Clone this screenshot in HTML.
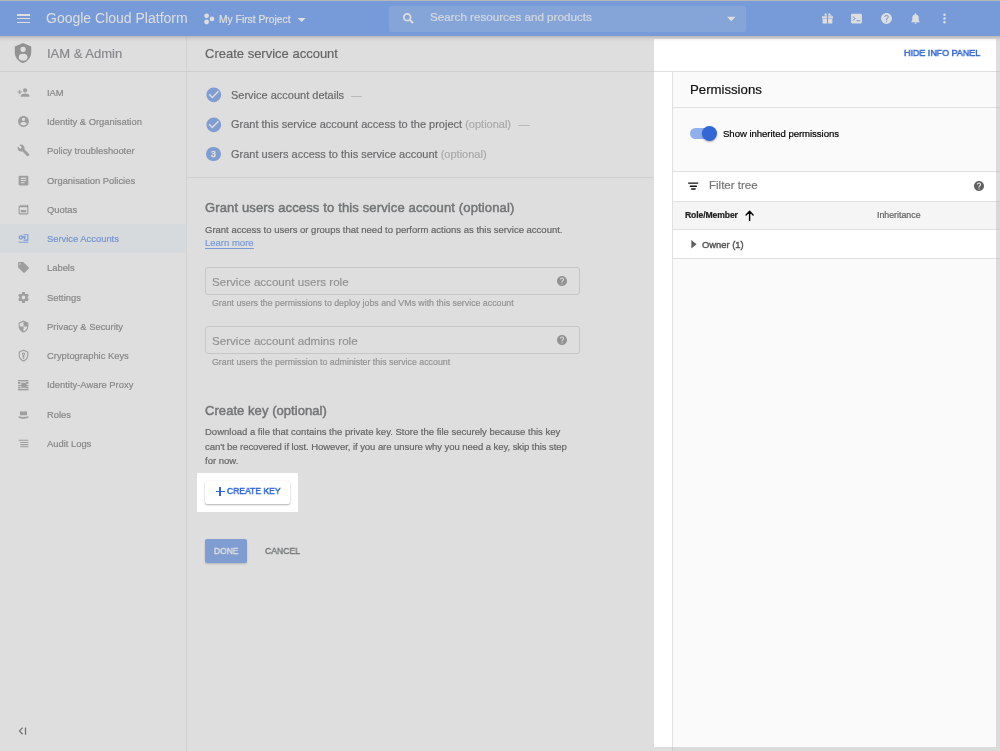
<!DOCTYPE html>
<html><head><meta charset="utf-8"><style>
html,body{margin:0;padding:0;width:1000px;height:751px;overflow:hidden;background:#fff;font-family:"Liberation Sans", sans-serif;}
.t{will-change:transform;-webkit-text-stroke:0.2px currentColor;}
.r{position:absolute;}
.t{position:absolute;white-space:nowrap;}
</style></head><body>
<div class="r" style="left:0px;top:0px;width:1000px;height:1px;background:#b9b9b9;"></div>
<div class="r" style="left:0px;top:1px;width:1000px;height:35px;background:#4285f4;"></div>
<div class="r" style="left:17px;top:14.2px;width:13.2px;height:1.6px;background:#fff;"></div>
<div class="r" style="left:17px;top:17.9px;width:13.2px;height:1.6px;background:#fff;"></div>
<div class="r" style="left:17px;top:21.6px;width:13.2px;height:1.6px;background:#fff;"></div>
<div class="t" style="left:46.4px;top:10.05px;font-size:14px;line-height:16.80px;color:#fff;font-weight:400;-webkit-text-stroke:0">Google Cloud Platform</div>
<svg class="r" style="left:200px;top:10px" width="20" height="18"><circle cx="6.6" cy="5.8" r="2.4" fill="#fff"/><circle cx="6.6" cy="12" r="2.4" fill="#fff"/><circle cx="12" cy="8.9" r="2.3" fill="#fff"/></svg>
<div class="t" style="left:219px;top:14.45px;font-size:10.3px;line-height:12.36px;color:#fff;font-weight:400;">My First Project</div>
<svg class="r" style="left:296px;top:17px" width="12" height="7"><path d="M1.6 1H9.7L5.65 5z" fill="#fff"/></svg>
<div class="r" style="left:389px;top:5.5px;width:357px;height:26px;background:rgba(255,255,255,0.15);border-radius:2px"></div>
<svg class="r" style="left:400px;top:10px" width="16" height="16"><circle cx="7.2" cy="7.2" r="3.4" stroke="#fff" stroke-width="1.7" fill="none"/><path d="M9.6 9.6L13 13" stroke="#fff" stroke-width="2"/></svg>
<div class="t" style="left:430px;top:10.47px;font-size:11.65px;line-height:13.98px;color:rgba(255,255,255,0.85);font-weight:400;">Search resources and products</div>
<svg class="r" style="left:725px;top:15px" width="12" height="8"><path d="M2 1.8H10.5L6.25 6.3z" fill="#fff"/></svg>
<svg class="r" style="left:820.5px;top:11.7px;" width="13" height="13" viewBox="0 0 24 24"><path fill="#fff" fill-rule="evenodd" d="M3 7h7.5V4.5C10.5 3 9 2 7.8 2.6 6.9 3 6.3 4 6.6 5L7 7zm10.5 0H21L17.4 5c.3-1-.3-2-1.2-2.4C15 2 13.5 3 13.5 4.5zM2 8h9v4H2zM13 8h9v4h-9zM3 13h8v8H3zM13 13h8v8h-8z"/></svg>
<svg class="r" style="left:850.0px;top:11.7px;" width="13" height="13" viewBox="0 0 24 24"><path fill="#fff" fill-rule="evenodd" d="M20 3H4c-1.1 0-2 .9-2 2v14c0 1.1.9 2 2 2h16c1.1 0 2-.9 2-2V5c0-1.1-.9-2-2-2zM5.5 16.2l-1-1.1L8.3 12 4.5 8.9l1-1.1L10.7 12zM12 17v-2h7v2z"/></svg>
<svg class="r" style="left:879.5px;top:11.7px;" width="13" height="13" viewBox="0 0 24 24"><path fill="#fff" fill-rule="evenodd" d="M12 2C6.48 2 2 6.48 2 12s4.48 10 10 10 10-4.48 10-10S17.52 2 12 2zm1 17h-2v-2h2v2zm2.07-7.75l-.9.92C13.45 12.9 13 13.5 13 15h-2v-.5c0-1.1.45-2.1 1.17-2.83l1.24-1.26c.37-.36.59-.86.59-1.41 0-1.1-.9-2-2-2s-2 .9-2 2H8c0-2.21 1.79-4 4-4s4 1.79 4 4c0 .88-.36 1.68-.93 2.25z"/></svg>
<svg class="r" style="left:908.5px;top:11.7px;" width="13" height="13" viewBox="0 0 24 24"><path fill="#fff" fill-rule="evenodd" d="M12 22c1.1 0 2-.9 2-2h-4c0 1.1.89 2 2 2zm6-6v-5c0-3.07-1.64-5.64-4.5-6.32V4c0-.83-.67-1.5-1.5-1.5s-1.5.67-1.5 1.5v.68C7.63 5.36 6 7.92 6 11v5l-2 2v1h16v-1l-2-2z"/></svg>
<svg class="r" style="left:936.5px;top:10.7px;" width="15" height="15" viewBox="0 0 24 24"><path fill="#fff" fill-rule="evenodd" d="M12 8c1.1 0 2-.9 2-2s-.9-2-2-2-2 .9-2 2 .9 2 2 2zm0 2c-1.1 0-2 .9-2 2s.9 2 2 2 2-.9 2-2-.9-2-2-2zm0 6c-1.1 0-2 .9-2 2s.9 2 2 2 2-.9 2-2-.9-2-2-2z"/></svg>
<div class="r" style="left:186px;top:36px;width:1px;height:715px;background:#ececec;"></div>
<div class="r" style="left:0px;top:71px;width:187px;height:1px;background:#e6e6e6;"></div>
<svg class="r" style="left:12px;top:42px;" width="22" height="22" viewBox="0 0 24 24"><path fill="#757575" fill-rule="evenodd" d="M12 1L3 5v6c0 5.55 3.84 10.74 9 12 5.16-1.26 9-6.45 9-12V5l-9-4zM9.2 8a2.9 2.9 0 1 0 5.8 0a2.9 2.9 0 1 0 -5.8 0zM7.3 16.6a4.8 3.8 0 1 0 9.6 0a4.8 3.8 0 1 0 -9.6 0z"/></svg>
<div class="t" style="left:46.9px;top:45.50px;font-size:13px;line-height:15.60px;color:#5f6368;font-weight:400;">IAM &amp; Admin</div>
<svg class="r" style="left:17px;top:85.7px;" width="13" height="13" viewBox="0 0 24 24"><path fill="#8a8a8a" fill-rule="evenodd" d="M15 12c2.21 0 4-1.79 4-4s-1.79-4-4-4-4 1.79-4 4 1.79 4 4 4zm-9-2V7H4v3H1v2h3v3h2v-3h3v-2H6zm9 4c-2.67 0-8 1.34-8 4v2h16v-2c0-2.66-5.33-4-8-4z"/></svg>
<div class="t" style="left:47px;top:86.70px;font-size:9.4px;line-height:11.28px;color:#616161;font-weight:400;">IAM</div>
<svg class="r" style="left:17px;top:115.0px;" width="13" height="13" viewBox="0 0 24 24"><path fill="#8a8a8a" fill-rule="evenodd" d="M12 2C6.48 2 2 6.48 2 12s4.48 10 10 10 10-4.48 10-10S17.52 2 12 2zm0 3c1.66 0 3 1.34 3 3s-1.34 3-3 3-3-1.34-3-3 1.34-3 3-3zm0 14.2c-2.5 0-4.71-1.28-6-3.22.03-1.99 4-3.08 6-3.08 1.99 0 5.97 1.09 6 3.08-1.29 1.94-3.5 3.22-6 3.22z"/></svg>
<div class="t" style="left:47px;top:116.00px;font-size:9.4px;line-height:11.28px;color:#616161;font-weight:400;">Identity &amp; Organisation</div>
<svg class="r" style="left:17px;top:144.2px;" width="13" height="13" viewBox="0 0 24 24"><path fill="#8a8a8a" fill-rule="evenodd" d="M22.7 19l-9.1-9.1c.9-2.3.4-5-1.5-6.9-2-2-5-2.4-7.4-1.3L9 6 6 9 1.6 4.7C.4 7.1.9 10.1 2.9 12.1c1.9 1.9 4.6 2.4 6.9 1.5l9.1 9.1c.4.4 1 .4 1.4 0l2.3-2.3c.5-.4.5-1.1.1-1.4z"/></svg>
<div class="t" style="left:47px;top:145.20px;font-size:9.4px;line-height:11.28px;color:#616161;font-weight:400;">Policy troubleshooter</div>
<svg class="r" style="left:17px;top:173.5px;" width="13" height="13" viewBox="0 0 24 24"><path fill="#8a8a8a" fill-rule="evenodd" d="M19 3H5c-1.1 0-2 .9-2 2v14c0 1.1.9 2 2 2h14c1.1 0 2-.9 2-2V5c0-1.1-.9-2-2-2zm-5 14H7v-2h7v2zm3-4H7v-2h10v2zm0-4H7V7h10v2z"/></svg>
<div class="t" style="left:47px;top:174.50px;font-size:9.4px;line-height:11.28px;color:#616161;font-weight:400;">Organisation Policies</div>
<svg class="r" style="left:17px;top:202.8px;" width="13" height="13" viewBox="0 0 24 24"><path fill="#8a8a8a" fill-rule="evenodd" d="M18 3v2h-2V3h-2v2h-2V3h-2v2H8V3H6v2H5c-1.1 0-2 .9-2 2v12c0 1.1.9 2 2 2h14c1.1 0 2-.9 2-2V5c0-1.1-.9-2-2-2zM19 19H5V8h14zM7 13h10v4H7z"/></svg>
<div class="t" style="left:47px;top:203.80px;font-size:9.4px;line-height:11.28px;color:#616161;font-weight:400;">Quotas</div>
<div class="r" style="left:0px;top:223.9px;width:186px;height:29.3px;background:#f3f7fe;"></div>
<svg class="r" style="left:17px;top:232.0px;" width="13" height="13" viewBox="0 0 24 24"><path fill="#4285f4" fill-rule="evenodd" d="M7 6c-2.2 0-4 1.8-4 4s1.8 4 4 4c1.9 0 3.4-1.3 3.9-3h2.1v2h2v-2h1V8h-5.1C10.4 6.8 8.9 6 7 6zm0 2.3c.9 0 1.7.8 1.7 1.7S7.9 11.7 7 11.7 5.3 10.9 5.3 10 6.1 8.3 7 8.3zM12 4v2h7v8h-7v2h9V4zM3 18v2h18v-2z"/></svg>
<div class="t" style="left:47px;top:233.00px;font-size:9.4px;line-height:11.28px;color:#3b78e7;font-weight:400;">Service Accounts</div>
<svg class="r" style="left:17px;top:261.3px;" width="13" height="13" viewBox="0 0 24 24"><path fill="#8a8a8a" fill-rule="evenodd" d="M21.41 11.58l-9-9C12.05 2.22 11.55 2 11 2H4c-1.1 0-2 .9-2 2v7c0 .55.22 1.05.59 1.42l9 9c.36.36.86.58 1.41.58.55 0 1.05-.22 1.41-.59l7-7c.37-.36.59-.86.59-1.41 0-.55-.23-1.06-.59-1.42zM5.5 7C4.67 7 4 6.33 4 5.5S4.67 4 5.5 4 7 4.67 7 5.5 6.33 7 5.5 7z"/></svg>
<div class="t" style="left:47px;top:262.30px;font-size:9.4px;line-height:11.28px;color:#616161;font-weight:400;">Labels</div>
<svg class="r" style="left:17px;top:290.6px;" width="13" height="13" viewBox="0 0 24 24"><path fill="#8a8a8a" fill-rule="evenodd" d="M19.43 12.98c.04-.32.07-.64.07-.98s-.03-.66-.07-.98l2.11-1.65c.19-.15.24-.42.12-.64l-2-3.46c-.12-.22-.39-.3-.61-.22l-2.49 1c-.52-.4-1.08-.73-1.69-.98l-.38-2.65C14.46 2.18 14.25 2 14 2h-4c-.25 0-.46.18-.49.42l-.38 2.65c-.61.25-1.17.59-1.69.98l-2.49-1c-.23-.09-.49 0-.61.22l-2 3.46c-.13.22-.07.49.12.64l2.11 1.65c-.04.32-.07.65-.07.98s.03.66.07.98l-2.11 1.65c-.19.15-.24.42-.12.64l2 3.46c.12.22.39.3.61.22l2.49-1c.52.4 1.08.73 1.69.98l.38 2.65c.03.24.24.42.49.42h4c.25 0 .46-.18.49-.42l.38-2.65c.61-.25 1.17-.59 1.69-.98l2.49 1c.23.09.49 0 .61-.22l2-3.46c.12-.22.07-.49-.12-.64l-2.11-1.65zM12 15.5c-1.93 0-3.5-1.57-3.5-3.5s1.57-3.5 3.5-3.5 3.5 1.57 3.5 3.5-1.57 3.5-3.5 3.5z"/></svg>
<div class="t" style="left:47px;top:291.60px;font-size:9.4px;line-height:11.28px;color:#616161;font-weight:400;">Settings</div>
<svg class="r" style="left:17px;top:319.9px;" width="13" height="13" viewBox="0 0 24 24"><path fill="#8a8a8a" fill-rule="evenodd" d="M12 1L3 5v6c0 5.55 3.84 10.74 9 12 5.16-1.26 9-6.45 9-12V5l-9-4zm0 10.99h7c-.53 4.12-3.28 7.79-7 8.94V12H5V6.3l7-3.11v8.8z"/></svg>
<div class="t" style="left:47px;top:320.90px;font-size:9.4px;line-height:11.28px;color:#616161;font-weight:400;">Privacy &amp; Security</div>
<svg class="r" style="left:17px;top:349.1px;" width="13" height="13" viewBox="0 0 24 24"><path fill="#8a8a8a" fill-rule="evenodd" d="M12 1L3 5v6c0 5.55 3.84 10.74 9 12 5.16-1.26 9-6.45 9-12V5l-9-4zm0 2.18l7 3.12V11c0 4.52-2.98 8.69-7 9.93-4.02-1.24-7-5.41-7-9.93V6.3l7-3.12zM12 6.5c-1.66 0-3 1.34-3 3 0 1.1.6 2.05 1.5 2.57V18h3v-2h-1v-1h1v-2.93c.9-.52 1.5-1.47 1.5-2.57 0-1.66-1.34-3-3-3zm0 1.8c.66 0 1.2.54 1.2 1.2s-.54 1.2-1.2 1.2-1.2-.54-1.2-1.2.54-1.2 1.2-1.2z"/></svg>
<div class="t" style="left:47px;top:350.10px;font-size:9.4px;line-height:11.28px;color:#616161;font-weight:400;">Cryptographic Keys</div>
<svg class="r" style="left:14px;top:374.5px" width="20" height="20"><rect x="4" y="5" width="10.5" height="1.4" fill="#8a8a8a"/><rect x="4" y="7" width="2.4" height="1.8" fill="#8a8a8a"/><rect x="12.1" y="7" width="2.4" height="1.8" fill="#8a8a8a"/><rect x="7.2" y="7.7" width="5.3" height="5.1" fill="#8a8a8a"/><rect x="4" y="9.9" width="10.5" height="1.1" fill="#8a8a8a"/><rect x="4" y="11.7" width="2.4" height="1.6" fill="#8a8a8a"/><rect x="12.1" y="11.7" width="2.4" height="1.6" fill="#8a8a8a"/><rect x="4" y="13.8" width="10.5" height="1.6" fill="#8a8a8a"/></svg>
<div class="t" style="left:47px;top:379.40px;font-size:9.4px;line-height:11.28px;color:#616161;font-weight:400;">Identity-Aware Proxy</div>
<svg class="r" style="left:17px;top:407.7px;" width="13" height="13" viewBox="0 0 24 24"><path fill="#8a8a8a" fill-rule="evenodd" d="M5.5 8c0-1.2.8-2 2-2 1 0 1.5.8 4.5.8s3.5-.8 4.5-.8c1.2 0 2 .8 2 2v5.2h-13zM3 15.4c2.8 1 5.8 1.4 9 1.4s6.2-.4 9-1.4v2.4c-2.8 1.2-5.8 2-9 2s-6.2-.8-9-2z"/></svg>
<div class="t" style="left:47px;top:408.70px;font-size:9.4px;line-height:11.28px;color:#616161;font-weight:400;">Roles</div>
<svg class="r" style="left:17px;top:436.9px;" width="13" height="13" viewBox="0 0 24 24"><path fill="#8a8a8a" fill-rule="evenodd" d="M3 5h18v2H3zM6 9h15v2H6zM6 13h15v2H6zM6 17h15v2H6z"/></svg>
<div class="t" style="left:47px;top:437.90px;font-size:9.4px;line-height:11.28px;color:#616161;font-weight:400;">Audit Logs</div>
<svg class="r" style="left:17px;top:725.8px" width="12" height="10" viewBox="0 0 12 10"><path d="M5.6 1.6L2.5 4.9l3.1 3.3M8.5 1.4v7.3" stroke="#424242" stroke-width="1.35" fill="none"/></svg>
<div class="r" style="left:187px;top:71px;width:467px;height:1px;background:#e6e6e6;"></div>
<div class="t" style="left:205px;top:45.70px;font-size:13px;line-height:15.60px;color:#212121;font-weight:400;">Create service account</div>
<svg class="r" style="left:205px;top:86.3px;" width="17.6" height="17.6" viewBox="0 0 24 24"><path fill="#5489e9" fill-rule="evenodd" d="M12 2C6.48 2 2 6.48 2 12s4.48 10 10 10 10-4.48 10-10S17.52 2 12 2zm-2 15l-5-5 1.41-1.41L10 14.17l7.59-7.59L19 8l-9 9z"/></svg>
<div class="t" style="left:231.0px;top:88.79px;font-size:11px;line-height:13.20px;color:#2a2b2e;font-weight:400;">Service account details</div>
<svg class="r" style="left:205px;top:115.8px;" width="17.6" height="17.6" viewBox="0 0 24 24"><path fill="#5489e9" fill-rule="evenodd" d="M12 2C6.48 2 2 6.48 2 12s4.48 10 10 10 10-4.48 10-10S17.52 2 12 2zm-2 15l-5-5 1.41-1.41L10 14.17l7.59-7.59L19 8l-9 9z"/></svg>
<div class="t" style="left:231.0px;top:118.29px;font-size:11px;line-height:13.20px;color:#2a2b2e;font-weight:400;">Grant this service account access to the project <span style="color:#9e9e9e">(optional)</span></div>
<div class="r" style="left:206.2px;top:146.5px;width:14.8px;height:14.8px;background:#5489e9;border-radius:50%"></div>
<div class="t" style="left:210.8px;top:149.26px;font-size:8.6px;line-height:10.32px;color:#fff;font-weight:400;-webkit-text-stroke:0.5px #fff">3</div>
<div class="t" style="left:231.0px;top:147.99px;font-size:11px;line-height:13.20px;color:#2a2b2e;font-weight:400;">Grant users access to this service account <span style="color:#9e9e9e">(optional)</span></div>
<div class="r" style="left:350.7px;top:95.5px;width:11.6px;height:1px;background:#bdbdbd;"></div>
<div class="r" style="left:517.7px;top:125px;width:12.6px;height:1px;background:#bdbdbd;"></div>
<div class="r" style="left:187px;top:177px;width:467px;height:1px;background:#e6e6e6;"></div>
<div class="t" style="left:205px;top:199.70px;font-size:13px;line-height:15.60px;color:#3c4043;font-weight:400;letter-spacing:0.14px;-webkit-text-stroke:0.5px #3c4043">Grant users access to this service account (optional)</div>
<div class="t" style="left:205px;top:223.91px;font-size:9.5px;line-height:11.40px;color:#202124;font-weight:400;">Grant access to users or groups that need to perform actions as this service account.</div>
<div class="t" style="left:205px;top:238.41px;font-size:9.5px;line-height:11.40px;color:#4285f4;font-weight:400;border-bottom:1px solid #4285f4;line-height:10px;height:auto">Learn more</div>
<div class="r" style="left:205px;top:267px;width:375px;height:28px;background:transparent;border:1px solid #d2d4d8;border-radius:3px;box-sizing:border-box"></div>
<div class="t" style="left:211.8px;top:275.02px;font-size:11.6px;line-height:13.92px;color:#757575;font-weight:400;">Service account users role</div>
<svg class="r" style="left:556px;top:274.8px;" width="12" height="12" viewBox="0 0 24 24"><path fill="#757575" fill-rule="evenodd" d="M12 2C6.48 2 2 6.48 2 12s4.48 10 10 10 10-4.48 10-10S17.52 2 12 2zm1 17h-2v-2h2v2zm2.07-7.75l-.9.92C13.45 12.9 13 13.5 13 15h-2v-.5c0-1.1.45-2.1 1.17-2.83l1.24-1.26c.37-.36.59-.86.59-1.41 0-1.1-.9-2-2-2s-2 .9-2 2H8c0-2.21 1.79-4 4-4s4 1.79 4 4c0 .88-.36 1.68-.93 2.25z"/></svg>
<div class="t" style="left:212.3px;top:297.87px;font-size:8.8px;line-height:10.56px;color:#757575;font-weight:400;">Grant users the permissions to deploy jobs and VMs with this service account</div>
<div class="r" style="left:205px;top:326px;width:375px;height:28px;background:transparent;border:1px solid #d2d4d8;border-radius:3px;box-sizing:border-box"></div>
<div class="t" style="left:211.8px;top:334.02px;font-size:11.6px;line-height:13.92px;color:#757575;font-weight:400;">Service account admins role</div>
<svg class="r" style="left:556px;top:333.8px;" width="12" height="12" viewBox="0 0 24 24"><path fill="#757575" fill-rule="evenodd" d="M12 2C6.48 2 2 6.48 2 12s4.48 10 10 10 10-4.48 10-10S17.52 2 12 2zm1 17h-2v-2h2v2zm2.07-7.75l-.9.92C13.45 12.9 13 13.5 13 15h-2v-.5c0-1.1.45-2.1 1.17-2.83l1.24-1.26c.37-.36.59-.86.59-1.41 0-1.1-.9-2-2-2s-2 .9-2 2H8c0-2.21 1.79-4 4-4s4 1.79 4 4c0 .88-.36 1.68-.93 2.25z"/></svg>
<div class="t" style="left:212.3px;top:356.87px;font-size:8.8px;line-height:10.56px;color:#757575;font-weight:400;">Grant users the permission to administer this service account</div>
<div class="t" style="left:205px;top:402.70px;font-size:13px;line-height:15.60px;color:#3c4043;font-weight:400;letter-spacing:0.06px;-webkit-text-stroke:0.5px #3c4043">Create key (optional)</div>
<div class="t" style="left:205px;top:426.01px;font-size:9.5px;line-height:11.40px;color:#202124;font-weight:400;">Download a file that contains the private key. Store the file securely because this key</div>
<div class="t" style="left:205px;top:440.51px;font-size:9.5px;line-height:11.40px;color:#202124;font-weight:400;letter-spacing:-0.06px">can't be recovered if lost. However, if you are unsure why you need a key, skip this step</div>
<div class="t" style="left:205px;top:455.01px;font-size:9.5px;line-height:11.40px;color:#202124;font-weight:400;">for now.</div>
<div class="r" style="left:205px;top:539px;width:42px;height:23.5px;background:#5489e9;border-radius:2px;box-shadow:0 1px 2px rgba(0,0,0,0.3)"></div>
<div class="t" style="left:213.9px;top:544.91px;font-size:9.6px;line-height:11.52px;color:#fff;font-weight:400;transform:scaleX(0.88);transform-origin:0 0;-webkit-text-stroke:0.4px #fff">DONE</div>
<div class="t" style="left:265.3px;top:544.91px;font-size:9.6px;line-height:11.52px;color:#3c4043;font-weight:400;transform:scaleX(0.9);transform-origin:0 0;-webkit-text-stroke:0.4px #3c4043">CANCEL</div>
<div class="r" style="left:654px;top:36px;width:346px;height:715px;background:#ffffff;"></div>
<div class="t" style="left:903.6px;top:48.20px;font-size:9.3px;line-height:11.16px;color:#3367d6;font-weight:400;transform:scaleX(0.96);transform-origin:0 0;-webkit-text-stroke:0.5px #3367d6">HIDE INFO PANEL</div>
<div class="r" style="left:654px;top:71px;width:346px;height:1px;background:#e0e0e0;"></div>
<div class="r" style="left:672px;top:72px;width:328px;height:679px;background:#fafafa;"></div>
<div class="r" style="left:672px;top:72px;width:1px;height:679px;background:#e0e0e0;"></div>
<div class="t" style="left:690.2px;top:82.21px;font-size:13.2px;line-height:15.84px;color:#111;font-weight:400;">Permissions</div>
<div class="r" style="left:673px;top:107px;width:327px;height:1px;background:#e0e0e0;"></div>
<div class="r" style="left:690.2px;top:128px;width:24px;height:10.8px;background:#8fb0ea;border-radius:5.4px"></div>
<div class="r" style="left:702px;top:126px;width:15px;height:15px;background:#3367d6;border-radius:50%;box-shadow:0 1px 2px rgba(0,0,0,0.3)"></div>
<div class="t" style="left:722.6px;top:128.11px;font-size:9.6px;line-height:11.52px;color:#000;font-weight:400;letter-spacing:-0.05px">Show inherited permissions</div>
<div class="r" style="left:673px;top:171px;width:327px;height:1px;background:#e0e0e0;"></div>
<div class="r" style="left:673px;top:172px;width:327px;height:29px;background:#ffffff;"></div>
<svg class="r" style="left:680px;top:175px" width="30" height="20"><path d="M8.7 8.1H17.7M10.4 11.3H16.4M11.7 14.05H15.1" stroke="#111" stroke-width="1.45" stroke-linecap="round"/></svg>
<div class="t" style="left:709.4px;top:179.42px;font-size:11.5px;line-height:13.80px;color:#757575;font-weight:400;">Filter tree</div>
<svg class="r" style="left:973px;top:180px;" width="12" height="12" viewBox="0 0 24 24"><path fill="#616161" fill-rule="evenodd" d="M12 2C6.48 2 2 6.48 2 12s4.48 10 10 10 10-4.48 10-10S17.52 2 12 2zm1 17h-2v-2h2v2zm2.07-7.75l-.9.92C13.45 12.9 13 13.5 13 15h-2v-.5c0-1.1.45-2.1 1.17-2.83l1.24-1.26c.37-.36.59-.86.59-1.41 0-1.1-.9-2-2-2s-2 .9-2 2H8c0-2.21 1.79-4 4-4s4 1.79 4 4c0 .88-.36 1.68-.93 2.25z"/></svg>
<div class="r" style="left:673px;top:201px;width:327px;height:1px;background:#e0e0e0;"></div>
<div class="r" style="left:673px;top:202px;width:327px;height:27px;background:#f5f5f5;"></div>
<div class="t" style="left:684.5px;top:210.46px;font-size:8.6px;line-height:10.32px;color:#212121;font-weight:700;letter-spacing:-0.1px">Role/Member</div>
<svg class="r" style="left:735px;top:205px" width="30" height="20"><path d="M14.6 6.4V15.4M11.1 9.9L14.6 6.3L18.1 9.9" stroke="#000" stroke-width="1.4" stroke-linecap="round" stroke-linejoin="round" fill="none"/></svg>
<div class="t" style="left:877.4px;top:210.27px;font-size:8.8px;line-height:10.56px;color:#616161;font-weight:400;">Inheritance</div>
<div class="r" style="left:673px;top:229px;width:327px;height:1px;background:#e0e0e0;"></div>
<div class="r" style="left:673px;top:230px;width:327px;height:28px;background:#ffffff;"></div>
<svg class="r" style="left:690px;top:239px" width="8" height="11" viewBox="0 0 8 11"><path d="M1.3 1L6.6 5.2L1.3 9.4z" fill="#616161"/></svg>
<div class="t" style="left:702px;top:239.10px;font-size:9.4px;line-height:11.28px;color:#555;font-weight:400;-webkit-text-stroke:0.4px #555">Owner (1)</div>
<div class="r" style="left:673px;top:258px;width:327px;height:1px;background:#e0e0e0;"></div>
<svg class="r" style="left:0;top:0" width="1000" height="751" viewBox="0 0 1000 751"><path fill="rgb(182,182,182)" fill-opacity="0.45" fill-rule="evenodd" d="M0 0H1000V751H0Z M654 39H996V747H654Z M197 473H298V512H197Z"/></svg>
<div class="r" style="left:205px;top:480.6px;width:85px;height:23.5px;background:#fff;border-radius:2px;box-shadow:0 1px 2px rgba(0,0,0,0.3),0 0 1px rgba(0,0,0,0.15)"></div>
<div class="r" style="left:216px;top:490.6px;width:8.8px;height:1.8px;background:#3367d6;"></div>
<div class="r" style="left:219.45px;top:487.1px;width:1.8px;height:8.8px;background:#3367d6;"></div>
<div class="t" style="left:227px;top:486.49px;font-size:9.2px;line-height:11.04px;color:#3367d6;font-weight:400;transform:scaleX(0.93);transform-origin:0 0;-webkit-text-stroke:0.5px #3367d6">CREATE KEY</div>
<div class="r" style="left:0px;top:36px;width:1000px;height:6px;background:linear-gradient(rgba(0,0,0,0.17),rgba(0,0,0,0.05) 50%,rgba(0,0,0,0));"></div>
</body></html>
